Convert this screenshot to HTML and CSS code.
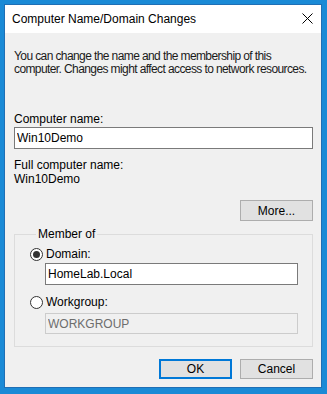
FILE: index.html
```html
<!DOCTYPE html>
<html lang="en">
<head>
  <meta charset="UTF-8" />
  <title>Computer Name/Domain Changes</title>
  <link rel="stylesheet" href="styles.css">
</head>
<body>

  <div class="dialog">
    <div class="titlebar">
      <span class="title">Computer Name/Domain Changes</span>
      <svg class="close" width="11" height="11" viewBox="0 0 11 11">
        <path d="M0.5 0.5 L10.5 10.5 M10.5 0.5 L0.5 10.5" stroke="#000" stroke-width="1" fill="none" />
      </svg>
    </div>

    <div class="content">
      <p class="intro">You can change the name and the membership of this<br>computer. Changes might affect access to network resources.</p>

      <label class="label label-name" for="computerName">Computer name:</label>
      <input class="field" id="computerName" type="text" value="Win10Demo" />

      <div class="label label-full">Full computer name:</div>
      <div class="label">Win10Demo</div>

      <div class="more-row">
        <button class="btn">More...</button>
      </div>

      <fieldset class="group">
        <legend>Member of</legend>

        <div class="radio-row">
          <span class="radio checked"></span>
          <span>Domain:</span>
        </div>
        <input class="field indent" type="text" value="HomeLab.Local" />

        <div class="radio-row workgroup">
          <span class="radio"></span>
          <span>Workgroup:</span>
        </div>
        <input class="field indent" type="text" value="WORKGROUP" disabled />
      </fieldset>

      <div class="actions">
        <button class="btn btn-default">OK</button>
        <button class="btn">Cancel</button>
      </div>
    </div>
  </div>

</body>
</html>
```

FILE: styles.css
```css
body {
  margin: 0;
  padding: 4px 0 0 4px;
  background: #1a8ad6;
  font-family: "Liberation Sans", Arial, sans-serif;
  font-size: 12px;
  color: #000;
}

.dialog {
  box-sizing: border-box;
  width: 318px;
  height: 384px;
  border: 1px solid #1f6fb5;
  display: flex;
  flex-direction: column;
  background: #f0f0f0;
}

.titlebar {
  height: 28px;
  background: #fff;
  display: flex;
  align-items: center;
  justify-content: space-between;
  padding: 0 8px 0 7px;
}

.title {
  font-size: 12px;
}

.close {
  margin-top: -1px;
}

.content {
  flex: 1;
  display: flex;
  flex-direction: column;
  padding: 17px 8px 0 9px;
  line-height: 13px;
}

.intro {
  margin: 0;
  color: #1a1a1a;
  letter-spacing: -0.6px;
  white-space: nowrap;
}

.label-name {
  margin-top: 37px;
  margin-bottom: 1px;
}

.label-full {
  margin-top: 10px;
  margin-bottom: 1px;
}

.field {
  box-sizing: border-box;
  height: 22px;
  margin: 0;
  padding: 0 2px;
  border: 1px solid #7a7a7a;
  background: #fff;
  font-family: inherit;
  font-size: 12px;
  color: #000;
  outline: none;
}

.field:disabled {
  height: 21px;
  background: #f0f0f0;
  border-color: #cccccc;
  color: #6d6d6d;
}

.more-row {
  display: flex;
  justify-content: flex-end;
  margin-top: 14px;
}

.btn {
  box-sizing: border-box;
  width: 73px;
  height: 21px;
  margin: 0;
  padding: 0;
  border: 1px solid #adadad;
  background: #e1e1e1;
  font-family: inherit;
  font-size: 12px;
  color: #000;
}

.btn-default {
  border: 2px solid #0078d7;
}

.group {
  margin: 7px 0 0;
  padding: 7px 14px 12px 15px;
  border: 1px solid #dcdcdc;
  display: flex;
  flex-direction: column;
}

.group legend {
  margin-left: 6px;
  padding: 0 2px;
}

.radio-row {
  display: flex;
  align-items: center;
  gap: 3px;
  margin-bottom: 2px;
}

.workgroup {
  margin-top: 11px;
  margin-bottom: 4px;
}

.radio {
  box-sizing: border-box;
  width: 13px;
  height: 13px;
  border: 1px solid #333;
  border-radius: 50%;
  background: #fff;
  display: flex;
  align-items: center;
  justify-content: center;
}

.radio.checked::after {
  content: "";
  width: 7px;
  height: 7px;
  border-radius: 50%;
  background: #333;
}

.indent {
  margin-left: 15px;
}

.actions {
  display: flex;
  justify-content: flex-end;
  gap: 8px;
  margin-top: 12px;
}

.actions .btn {
  height: 20px;
}
```
